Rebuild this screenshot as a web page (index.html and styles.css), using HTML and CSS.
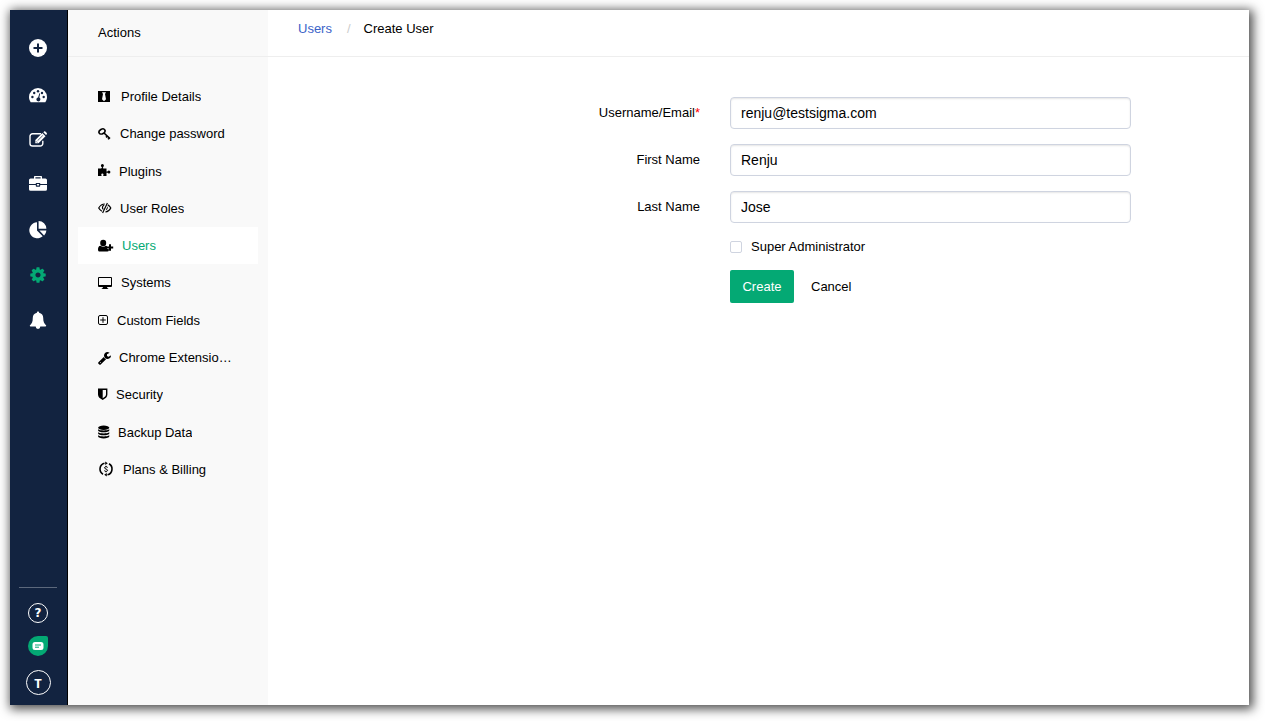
FILE: index.html
```html
<!DOCTYPE html>
<html lang="en">
<head>
<meta charset="utf-8">
<title>Create User</title>
<link rel="stylesheet" href="styles.css">
</head>
<body>
<div class="window">
  <nav class="rail" aria-label="Main">
    <a class="rail-link" href="#" aria-label="Add"><svg viewBox="0 0 18 18"><circle cx="9" cy="9" r="9"/><path class="cut" d="M9 4.500v9M4.500 9h9"/></svg></a>
    <a class="rail-link" href="#" aria-label="Dashboard"><svg viewBox="0 0 18 18"><path d="M1.700 16.200C.7 14.700 0 13 0 11a9 9 0 0 1 18 0c0 2-.7 3.700-1.700 5.200z"/><g class="cut-fill"><circle cx="3.400" cy="11" r="1.200"/><circle cx="5.200" cy="7" r="1.200"/><circle cx="9" cy="5.200" r="1.200"/><circle cx="13" cy="7" r="1.200"/><circle cx="14.700" cy="11" r="1.200"/><path d="M10.400 7.200l.8.2-.9 4.200a2 2 0 1 1-1.200-.2z"/></g></svg></a>
    <a class="rail-link" href="#" aria-label="Edit"><svg viewBox="0 1 18 18"><path class="line" d="M12 3.700H3.600A2.600 2.600 0 0 0 1 6.300v7.100A2.600 2.600 0 0 0 3.600 16h7.600a2.600 2.600 0 0 0 2.600-2.600v-2.600"/><path d="M13.300 3.100l3.200 3.200-7 7H6.300v-3.200zM14.300 2.300l.6-.6c.5-.5 1.100-.5 1.600 0l1.100 1.100c.5.500.5 1.100 0 1.600l-.6.6z"/><path class="thin-cut" d="M8.600 10.700l5.200-5.200M7.100 11.400l1.200 1.200"/></svg></a>
    <a class="rail-link" href="#" aria-label="Projects"><svg viewBox="0 2 18 18"><path fill-rule="evenodd" d="M5 4.500V3a1.200 1.200 0 0 1 1.200-1.200h5.600A1.200 1.200 0 0 1 13 3v1.500h3.400A1.600 1.600 0 0 1 18 6.100V10h-6.800V9H6.800v1H0V6.100a1.600 1.600 0 0 1 1.600-1.600zm1.400 0h5.200V3.200H6.400zM0 11h6.800v1.100c0 .4.3.7.7.7h3c.4 0 .7-.3.700-.7V11H18v4.200a1.600 1.600 0 0 1-1.600 1.600H1.600A1.600 1.600 0 0 1 0 15.200zM7.900 10h2.200v1.500H7.900z"/></svg></a>
    <a class="rail-link" href="#" aria-label="Reports"><svg viewBox="0 0 18 18"><path d="M8 1.300V9.500l5.700 5.700A8 8 0 1 1 8 1.300z"/><path d="M9.600 0a8 8 0 0 1 7.800 7.800H9.600zM10.400 9.400H17.400a8 8 0 0 1-2.300 5z"/></svg></a>
    <a class="rail-link rail-link-active" href="#" aria-label="Settings" aria-current="page"><svg viewBox="0 0 1792 1792"><path d="M1152 896q0-106-75-181t-181-75-181 75-75 181 75 181 181 75 181-75 75-181zm512-109v222q0 12-8 23t-20 13l-185 28q-19 54-39 91 35 50 107 138 10 12 10 25t-9 23q-27 37-99 108t-94 71q-12 0-26-9l-138-108q-44 23-91 38-16 136-29 186-7 28-36 28h-222q-14 0-24.500-8.500t-11.500-21.500l-28-184q-49-16-90-37l-141 107q-10 9-25 9-14 0-25-11-126-114-165-168-7-10-7-23 0-12 8-23 15-21 51-66.500t54-70.500q-27-50-41-99l-183-27q-13-2-21-12.500t-8-23.500v-222q0-12 8-23t19-13l186-28q14-46 39-92-40-57-107-138-10-12-10-24 0-10 9-23 26-36 98.500-107.500t94.500-71.500q13 0 26 10l138 107q44-23 91-38 16-136 29-186 7-28 36-28h222q14 0 24.500 8.500t11.500 21.500l28 184q49 16 90 37l142-107q9-9 24-9 13 0 25 10 129 119 165 170 7 8 7 22 0 12-8 23-15 21-51 66.500t-54 70.500q26 50 41 98l183 28q13 2 21 12.500t8 23.500z"/></svg></a>
    <a class="rail-link" href="#" aria-label="Notifications"><svg viewBox="0 0 18 18"><path d="M9 .5c.7 0 1.100.5 1.100 1.200 2.700.5 4.100 2.600 4.100 5.100 0 4 1 6 3 7.700 0 .7-.5 1.100-1.100 1.100h-4.800a2.300 2.300 0 0 1-4.600 0H1.900c-.6 0-1.100-.4-1.100-1.100 2-1.700 3-3.700 3-7.700 0-2.500 1.400-4.600 4.100-5.100C7.900 1 8.300.5 9 .5z"/></svg></a>
    <div class="rail-foot">
      <button class="round help" type="button" aria-label="Help">?</button>
      <button class="chat" type="button" aria-label="Chat"><svg viewBox="0 0 12 10"><path d="M3 1h6a2.500 2.500 0 0 1 2.500 2.500v3A2.500 2.500 0 0 1 9 9H3A2.500 2.500 0 0 1 .5 6.500v-3A2.500 2.500 0 0 1 3 1z"/><path class="chat-lines" d="M3 4h6M3 6.200h4"/></svg></button>
      <button class="round account" type="button" aria-label="Account">T</button>
    </div>
  </nav>

  <aside class="side">
    <h2 class="side-title">Actions</h2>
    <ul class="menu">
      <li><a class="item" href="#"><svg class="w15" viewBox="0 0 15 14"><path fill-rule="evenodd" d="M0 1h12v11H0zM4 2.200L5 4 4 9.300l2 2 2-2L7 4l1-1.800z"/></svg><span class="label">Profile Details</span></a></li>
      <li><a class="item" href="#"><svg class="w14" viewBox="0 0 14 14"><ellipse class="key" cx="4" cy="4.500" rx="3.200" ry="2.300" transform="rotate(-30 4 4.500)"/><path class="key" d="M6 6l6 5.600M8 10.400l1.600-1.700M10 12.300l1.600-1.600"/></svg><span class="label">Change password</span></a></li>
      <li><a class="item" href="#"><svg class="w13" viewBox="0 1 13 14"><path d="M0 5.500h3.600c.5 0 .6-.4.300-.9C3.400 3.800 2.900 3.400 2.900 2.600a1.500 1.500 0 0 1 3 0c0 .8-.6 1.200-.9 2-.2.500 0 .9.500.9h3v2.600c0 .6.400.7.900.4.600-.4.900-.9 1.500-.9a1.500 1.500 0 0 1 0 3c-.6 0-1-.6-1.600-.9-.5-.2-.8 0-.8.500v2.800H5.600c-.5 0-.6-.4-.3-.9.400-.7.200-1.600-.9-1.600s-1.400.9-.9 1.600c.3.500.1.900-.4.900H0z"/></svg><span class="label">Plugins</span></a></li>
      <li><a class="item" href="#"><svg class="w14" viewBox="0 0 14 14"><path class="eye" d="M6.800 3C4 3 2 4.700.7 7c.8 1.400 1.800 2.500 3.200 3.200M7.400 11c2.500-.3 4.300-1.800 5.400-4-.7-1.400-1.700-2.400-3-3.100M9.400 2L4.600 12M5.300 8.400C3.900 7.100 4.200 4.800 6.200 4.200"/><path d="M9.600 5.300c.7 1.800-.2 3.500-1.900 4z"/></svg><span class="label">User Roles</span></a></li>
      <li><a class="item item-active" href="#" aria-current="page"><svg class="w16" viewBox="0 0 16 14"><ellipse cx="5.200" cy="4" rx="3" ry="3.300"/><path d="M2.600 6.800c1.500 1.300 3.700 1.300 5.200 0 .5 0 .9.200 1.300.5v2.800h1.700v2c-.3.300-.7.500-1.300.5H2c-1.200 0-2-.7-2-1.900C0 9 .6 6.800 2.600 6.800z"/><path class="s2" d="M12 5.300v6.400M8.800 8.500h6.400"/></svg><span class="label">Users</span></a></li>
      <li><a class="item" href="#"><svg class="w15" viewBox="0 0 15 14"><path fill-rule="evenodd" d="M1 1h12a1 1 0 0 1 1 1v8a1 1 0 0 1-1 1H9l.4 1.200h.8v.8H3.800v-.8h.8L5 11H1a1 1 0 0 1-1-1V2a1 1 0 0 1 1-1zm0 1v7h12V2z"/></svg><span class="label">Systems</span></a></li>
      <li><a class="item" href="#"><svg class="w11" viewBox="0 0 11 14"><rect class="s1" x=".5" y="2.500" width="9" height="9" rx="1.500"/><path class="s1" d="M5 4.200v5.600M2.200 7h5.600"/></svg><span class="label">Custom Fields</span></a></li>
      <li><a class="item" href="#"><svg class="w13" viewBox="64 0 1664 1792"><path d="M448 1472q0-26-19-45t-45-19-45 19-19 45 19 45 45 19 45-19 19-45zm644-420l-682 682q-37 37-90 37-52 0-91-37l-106-108q-38-36-38-90 0-53 38-91l681-681q39 98 114.500 173.500t173.500 114.500zm634-435q0 39-23 106-47 134-164.500 217.500t-258.500 83.500q-185 0-316.500-131.500t-131.500-316.500 131.500-316.500 316.500-131.500q58 0 121.500 16.500t107.500 46.500q16 11 16 28t-16 28l-293 169v224l193 107q5-3 79-48.500t135.500-81 70.500-35.500q15 0 23.500 10t8.500 25z"/></svg><span class="label">Chrome Extensions</span></a></li>
      <li><a class="item" href="#"><svg class="w10" viewBox="0 1 10 14"><path fill-rule="evenodd" d="M0 1.500h9.400v6c0 2.500-2 4-4.700 5.500C2 11.500 0 10 0 7.500zM4.700 3v8.200C6.800 10 8 9 8 7.500V3z"/></svg><span class="label">Security</span></a></li>
      <li><a class="item" href="#"><svg class="w12" viewBox="0 0 12 14"><ellipse cx="5.700" cy="2.700" rx="5.600" ry="2.200"/><path d="M.1 4.200c2 1.600 9.200 1.600 11.200 0v1.300c0 2.400-11.200 2.400-11.200 0zM.1 7.200c2 1.600 9.200 1.600 11.200 0v1.300c0 2.400-11.200 2.400-11.200 0zM.1 10.200c2 1.600 9.200 1.600 11.200 0v1.400c0 2.400-11.200 2.400-11.200 0z"/></svg><span class="label">Backup Data</span></a></li>
      <li><a class="item" href="#"><svg class="w17" viewBox="0 0 17 16"><path class="ring" d="M6.500 2.200A6 6 0 0 0 5 13.200M9.500 13.800A6 6 0 0 0 11 2.800"/><path d="M7.200.4v3.600L9.800 2.200zM8.800 15.600V12L6.200 13.800z"/><path class="s1" d="M9.700 6.500C9.200 5.400 6.500 5.400 6.500 6.800 6.500 8.200 9.600 7.900 9.600 9.300 9.600 10.700 6.800 10.700 6.300 9.600M8 4.800v1M8 10.300v1"/></svg><span class="label">Plans &amp; Billing</span></a></li>
    </ul>
  </aside>

  <main class="main">
    <nav class="crumbs" aria-label="Breadcrumb">
      <a href="#">Users</a><span class="slash">/</span><span>Create User</span>
    </nav>
    <form class="form">
      <label for="email">Username/Email<span class="required">*</span></label>
      <input class="field" id="email" type="text" value="renju@testsigma.com">
      <label for="first">First Name</label>
      <input class="field" id="first" type="text" value="Renju">
      <label for="last">Last Name</label>
      <input class="field" id="last" type="text" value="Jose">
      <div class="check">
        <input id="admin" type="checkbox"><label for="admin">Super Administrator</label>
      </div>
      <div class="buttons">
        <button class="create" type="submit">Create</button>
        <button class="cancel" type="button">Cancel</button>
      </div>
    </form>
  </main>
</div>
</body>
</html>
```
FILE: styles.css
```css
* { box-sizing: border-box; }

body {
  margin: 0;
  min-height: 100vh;
  padding: 10px 16px 16px 10px;
  display: flex;
  background: #fff;
  color: #000;
  font: 13px/16px "Liberation Sans", Arial, sans-serif;
}

a { color: inherit; text-decoration: none; }

button, input { font: inherit; }

svg { display: block; fill: currentColor; }

.window {
  flex: 1;
  display: flex;
  background: #fff;
  box-shadow: 2px 2px 10px 2px rgba(0, 0, 0, 0.7);
}

/* Navigation rail */
.rail {
  flex: none;
  width: 58px;
  padding: 15px 1px 10px 0;
  display: flex;
  flex-direction: column;
  align-items: center;
  background: #122340;
  border-right: 1px solid #000;
  color: #fff;
}

.rail-link {
  width: 100%;
  height: 45px;
  display: grid;
  place-items: center;
}

.rail-link:first-child { margin-bottom: 2px; }

.rail-link svg { width: 18px; height: 18px; }

.rail-link-active { color: #04a974; }

.cut { stroke: #122340; stroke-width: 2; }
.cut-fill { fill: #122340; }
.thin-cut { stroke: #122340; stroke-width: 0.7; }
.line { fill: none; stroke: currentColor; stroke-width: 1.4; }

.rail-foot {
  width: 38px;
  margin-top: auto;
  padding-top: 15px;
  display: flex;
  flex-direction: column;
  align-items: center;
  gap: 13px;
  border-top: 1px solid #5c687c;
}

.round {
  padding: 0;
  border: 1px solid #fff;
  border-radius: 50%;
  background: none;
  color: #fff;
}

.help {
  width: 20px;
  height: 20px;
  font: bold 12px/16px "DejaVu Sans", sans-serif;
}

.account {
  width: 25px;
  height: 25px;
  margin-top: 1px;
  font: bold 13px/16px "Open Sans", sans-serif;
}

.chat {
  width: 20px;
  height: 20px;
  padding: 0;
  display: grid;
  place-items: center;
  border: 0;
  border-radius: 10px 2px 10px 10px;
  background: #04a974;
  color: #fff;
}

.chat svg { width: 12px; height: 10px; }
.chat-lines { stroke: #04a974; }

/* Actions sidebar */
.side {
  flex: none;
  width: 200px;
  background: #f9f9f9;
}

.side-title {
  height: 47px;
  margin: 0;
  padding: 15px 30px;
  border-bottom: 1px solid #eee;
  font-size: 13px;
  font-weight: normal;
}

.menu {
  margin: 0;
  padding: 21px 10px;
  list-style: none;
}

.item {
  display: flex;
  align-items: center;
  gap: 8px;
  padding: 10px 26px 10px 20px;
  line-height: 1.33;
}

.item svg { flex: none; height: 14px; }

.item-active { background: #fff; }
.item-active .label { color: #04a974; }

.label {
  overflow: hidden;
  text-overflow: ellipsis;
  white-space: nowrap;
}

.item .w10 { width: 10px; }
.item .w11 { width: 11px; }
.item .w12 { width: 12px; }
.item .w13 { width: 13px; }
.item .w14 { width: 14px; }
.item .w15 { width: 15px; }
.item .w16 { width: 16px; }
.item .w17 { width: 17px; height: 16px; }

.s1, .s2, .key, .eye, .ring { fill: none; stroke: currentColor; }
.s1 { stroke-width: 1; }
.s2 { stroke-width: 2; }
.key { stroke-width: 1.6; }
.eye { stroke-width: 1.2; }
.ring { stroke-width: 1.6; }

/* Content */
.main { flex: 1; min-width: 0; }

.crumbs {
  height: 47px;
  padding: 11px 30px;
  border-bottom: 1px solid #eee;
}

.crumbs a { color: #3a63c8; }

.slash { margin: 0 13px 0 15px; color: #ccc; }

.form {
  padding-top: 40px;
  display: grid;
  grid-template-columns: 432fr 401fr 88fr;
  column-gap: 30px;
  row-gap: 15px;
  align-items: center;
}

.form > label { grid-column: 1; text-align: right; }

.required { color: #f00; }

.field {
  grid-column: 2;
  width: 100%;
  height: 32px;
  padding: 0 10px;
  border: 1px solid #cfd4e0;
  border-radius: 4px;
  background: #fff;
  box-shadow: inset 0 1px 2px rgba(0, 0, 0, 0.1);
  color: #000;
  font-size: 14px;
}

.check {
  grid-column: 2;
  display: flex;
  align-items: center;
  gap: 9px;
  line-height: 17px;
}

.check input {
  appearance: none;
  width: 12px;
  height: 12px;
  margin: 0;
  border: 1px solid #cfd4e0;
  border-radius: 2px;
}

.buttons {
  grid-column: 2;
  display: flex;
  gap: 4px;
}

.create, .cancel {
  height: 33px;
  padding: 0 13px;
  border: 0;
  border-radius: 2px;
  background: none;
  color: #000;
}

.create {
  width: 64px;
  padding: 0;
  background: #04a974;
  color: #fff;
}
```
